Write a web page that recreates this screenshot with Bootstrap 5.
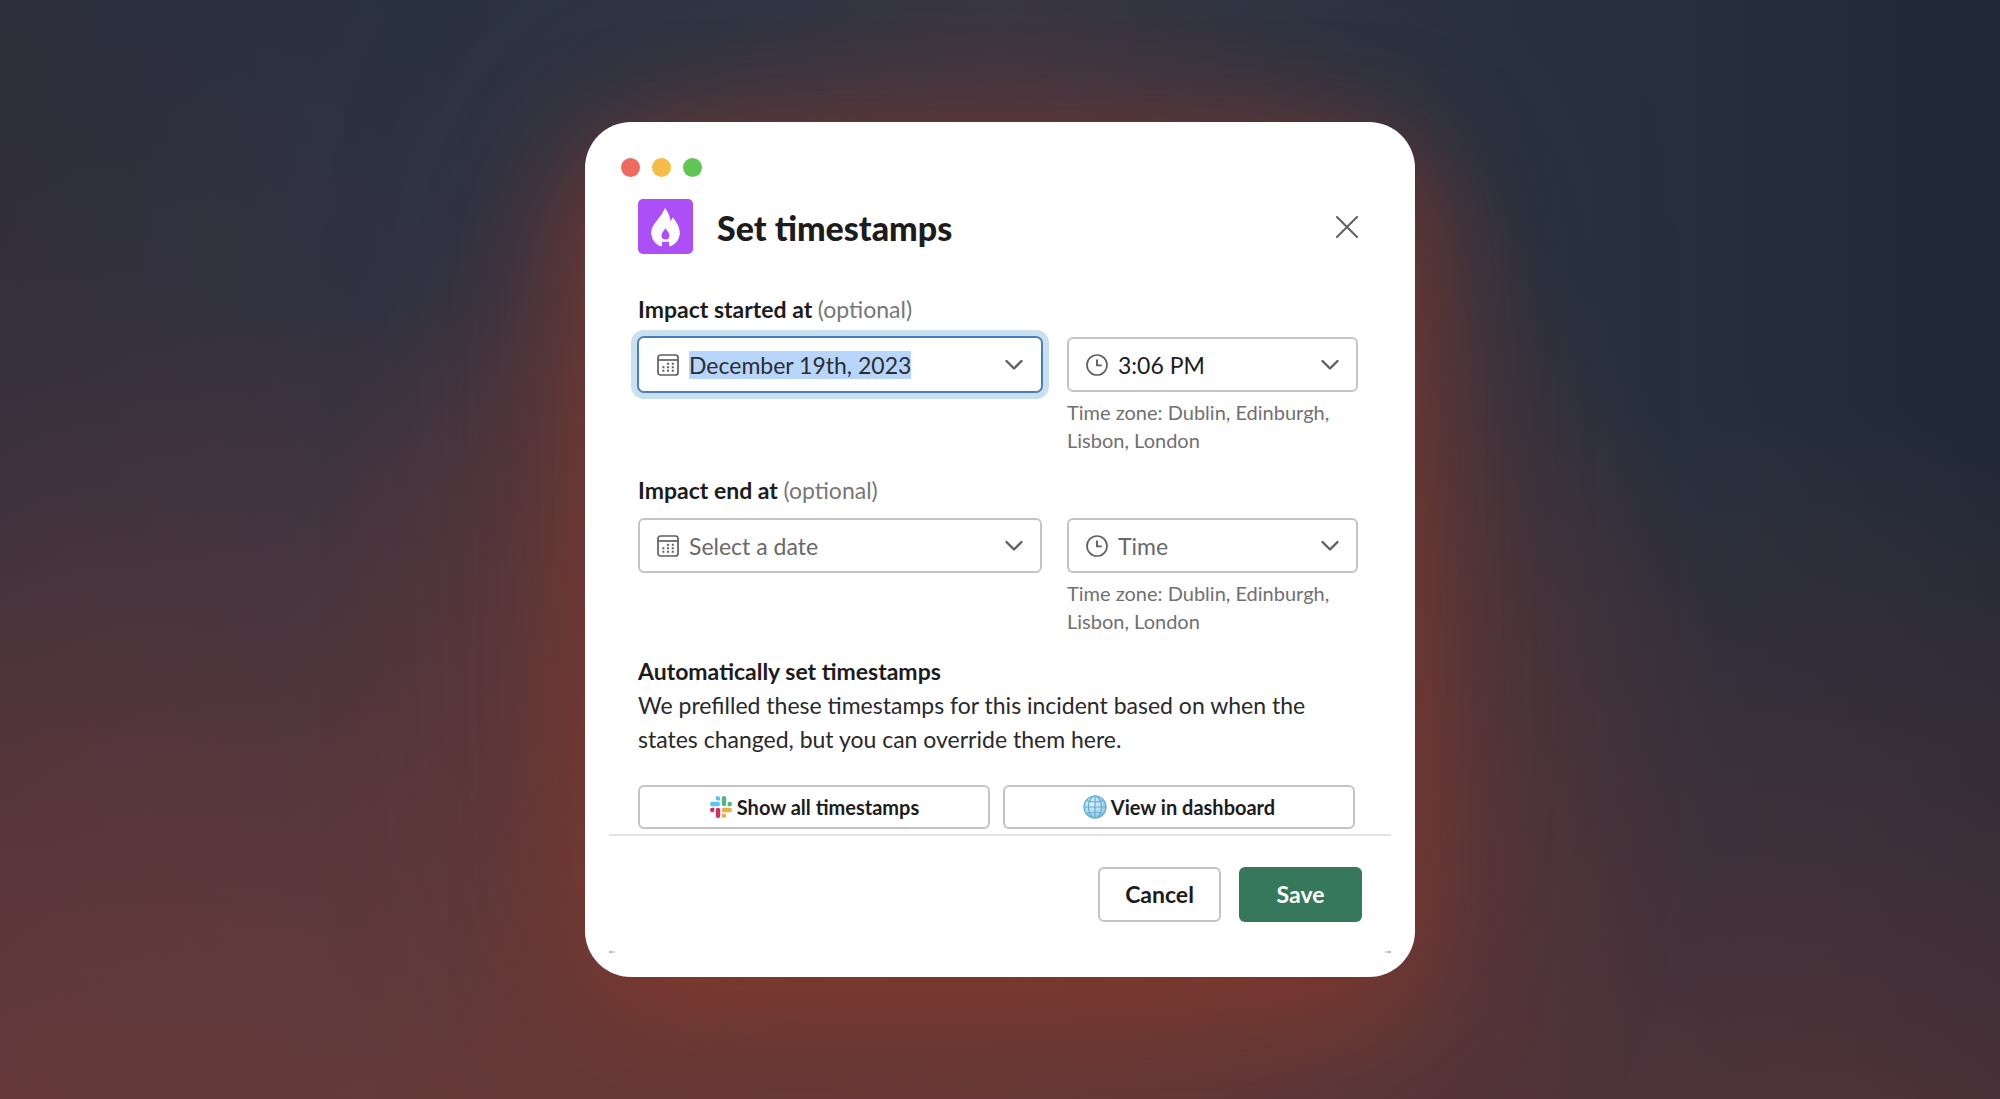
<!DOCTYPE html>
<html lang="en">
<head>
<meta charset="utf-8">
<meta name="viewport" content="width=device-width, initial-scale=1">
<title>Set timestamps</title>
<link href="https://cdn.jsdelivr.net/npm/bootstrap@5.3.0/dist/css/bootstrap.min.css" rel="stylesheet">
<style>
  body {
    font-family: Lato, "Liberation Sans", sans-serif;
    font-size: 23px;
    line-height: 34px;
    color: #1d1c1d;
    background:
      radial-gradient(ellipse 36% 66% at 50% 64%, rgba(112, 56, 50, .75) 0%, rgba(112, 56, 50, .6) 50%, rgba(112, 56, 50, 0) 100%),
      radial-gradient(ellipse 64% 88% at 24% 115%, rgba(112, 60, 56, .95) 0%, rgba(100, 58, 60, .65) 50%, rgba(90, 58, 64, 0) 100%),
      radial-gradient(ellipse 30% 50% at 0% 100%, rgba(116, 52, 50, .7) 0%, rgba(100, 50, 54, 0) 100%),
      radial-gradient(ellipse 50% 70% at 4% 50%, rgba(82, 52, 62, .45) 0%, rgba(82, 52, 62, 0) 100%),
      radial-gradient(ellipse 50% 80% at 90% 115%, rgba(90, 52, 56, .95) 0%, rgba(84, 48, 54, 0) 100%),
      linear-gradient(90deg, #272e3b 0%, #263243 20%, #343644 50%, #26303f 80%, #1f2937 100%);
  }
  .dialog-window {
    max-width: 830px;
    border-radius: 46px;
    padding-top: 36px;
    padding-bottom: 24px;
    box-shadow: 0 34px 110px 6px rgba(132, 56, 42, .78), 0 10px 240px 0 rgba(104, 62, 66, .4);
  }
  .window-dots { padding-left: 36px; gap: 12px; margin-bottom: 22px; }
  .window-dot { width: 19px; height: 19px; }
  .dot-red { background: #ee6a5f; }
  .dot-amber { background: #f5bd47; }
  .dot-green { background: #61c554; }
  .dialog-pad { padding-left: 53px; padding-right: 57px; }
  .dialog-title { font-size: 34px; line-height: 40px; font-weight: 900; margin-left: 24px; padding-top: 2px; }
  .dialog-close { line-height: 0; color: #616061; }
  .form-body { padding-top: 38px; padding-bottom: 5px; }
  .field-label { font-weight: 700; margin-bottom: 11px; }
  .field-label span { font-weight: 400; color: #777; }
  .field-row { gap: 25px; margin-bottom: 19px; }
  .date-col { flex: 404 1 0; min-width: 0; }
  .time-col { flex: 291 1 0; min-width: 0; }
  .picker {
    height: 55px;
    padding: 0 17px;
    border: 2px solid #c4c4c4;
    border-radius: 6px;
    background: #fff;
    color: #616061;
  }
  .picker svg { flex: none; }
  .picker input, .picker select {
    appearance: none;
    flex: 1 1 auto;
    min-width: 0;
    border: 0;
    outline: 0;
    padding: 0;
    margin-left: 10px;
    background: transparent;
    font: inherit;
    line-height: 28px;
    color: #696869;
  }
  .picker .has-value { color: #1d1c1d; }
  .picker input::placeholder { color: #696869; opacity: 1; }
  .picker input::selection { background: rgba(183, 212, 252, .99); color: #2c2d30; }
  .picker:focus-within { border-color: #4a7db8; box-shadow: 0 0 0 1px #4a7db8, 0 0 0 7px #c9e0f0; border-width: 1px; padding: 0 18px; }
  .field-hint { font-size: 20px; line-height: 28px; color: #717071; margin-top: 6px; }
  .body-copy { color: #2a292a; }
  .body-copy strong { color: #1d1c1d; }
  .action-row { gap: 13px; margin-top: 29px; padding-right: 3px; }
  .outline-action {
    border: 2px solid #c4c4c4;
    border-radius: 6px;
    background: #fff;
    color: #1d1c1d;
    font-weight: 700;
  }
  .wide-action { height: 44px; font-size: 20px; padding: 0 8px; }
  .dialog-footer { margin: 0 24px; border-top: 2px solid #e2e2e2; padding: 31px 29px 29px; gap: 18px; }
  .footer-action { width: 123px; height: 55px; font-size: 23px; font-weight: 700; padding: 0; border-radius: 6px; }
  .save-action, .save-action:hover { background: #35785b; color: #fff; }
  .corner-ticks { margin: 0 24px; height: 2px; }
  .corner-tick { width: 8px; height: 2px; background: linear-gradient(90deg, #a9a9a9, #fff); }
  .corner-tick:last-child { background: linear-gradient(270deg, #a9a9a9, #fff); }
</style>
<script src="https://cdn.jsdelivr.net/npm/bootstrap@5.3.0/dist/js/bootstrap.bundle.min.js"></script>
</head>
<body>
<svg class="d-none" aria-hidden="true">
  <symbol id="icon-calendar" viewBox="0 0 22 22">
    <rect x="1" y="1" width="20" height="20" rx="2.5" fill="none" stroke="currentColor" stroke-width="1.7"/>
    <path d="M1 6h20" stroke="currentColor" stroke-width="1.7"/>
    <path d="M10 9.800h2M14.800 9.800h2M5.400 13.200h2M10 13.200h2M14.800 13.200h2M5.400 16.800h2M10 16.800h2M14.800 16.800h2" stroke="currentColor" stroke-width="1.900"/>
  </symbol>
  <symbol id="icon-clock" viewBox="0 0 22 22">
    <circle cx="11" cy="11" r="10" fill="none" stroke="currentColor" stroke-width="1.7"/>
    <path d="M11 5.500V11.400H15.800" fill="none" stroke="currentColor" stroke-width="1.900"/>
  </symbol>
  <symbol id="icon-chevron" viewBox="0 0 18 12">
    <path d="M1.500 2 9 9.500 16.500 2" fill="none" stroke="currentColor" stroke-width="2.400" stroke-linecap="round" stroke-linejoin="round"/>
  </symbol>
</svg>

<main class="container-fluid min-vh-100 d-flex align-items-center justify-content-center">
  <section class="dialog-window bg-white w-100" role="dialog" aria-labelledby="dialog-title">
    <div class="window-dots d-flex">
      <span class="window-dot dot-red rounded-circle"></span>
      <span class="window-dot dot-amber rounded-circle"></span>
      <span class="window-dot dot-green rounded-circle"></span>
    </div>

    <header class="dialog-pad d-flex align-items-center">
      <svg width="55" height="55" viewBox="0 0 55 55" aria-hidden="true">
        <rect width="55" height="55" rx="5" fill="#ad4ff7"/>
        <path d="M27 9C28.500 11 32 15 32.300 22.500L34.800 18.200C37 21.500 41.800 27 41.800 33.500C41.800 40 38.200 45 32.500 47.200C31.500 47.500 31 47 31 46V42.800H24V46C24 47 23.500 47.500 22.500 47.200C16.800 45 13.200 40 13.200 33.500C13.200 25 22.500 20 27 9Z" fill="#fff"/>
        <path d="M27.500 29C28.500 31.500 31.500 33.500 31.500 36.500A4 4 0 0 1 23.500 36.500C23.500 33.500 26.500 31.500 27.500 29Z" fill="#ad4ff7"/>
      </svg>
      <h1 class="dialog-title mb-0 flex-grow-1" id="dialog-title">Set timestamps</h1>
      <button type="button" class="dialog-close btn border-0 p-0" aria-label="Close">
        <svg width="22" height="22" viewBox="0 0 22 22" aria-hidden="true"><path d="M1 1 21 21M21 1 1 21" stroke="currentColor" stroke-width="2" stroke-linecap="round"/></svg>
      </button>
    </header>

    <form class="form-body dialog-pad">
      <label class="field-label d-block" for="start-date">Impact started at <span>(optional)</span></label>
      <div class="field-row d-flex">
        <div class="date-col">
          <div class="picker d-flex align-items-center">
            <svg width="22" height="22" aria-hidden="true"><use href="#icon-calendar"/></svg>
            <input class="has-value" type="text" id="start-date" value="December 19th, 2023" autocomplete="off">
            <svg width="18" height="12" aria-hidden="true"><use href="#icon-chevron"/></svg>
          </div>
        </div>
        <div class="time-col">
          <div class="picker d-flex align-items-center">
            <svg width="22" height="22" aria-hidden="true"><use href="#icon-clock"/></svg>
            <select class="has-value" aria-label="Impact started at, time"><option>3:06 PM</option></select>
            <svg width="18" height="12" aria-hidden="true"><use href="#icon-chevron"/></svg>
          </div>
          <p class="field-hint mb-0">Time zone: Dublin, Edinburgh, Lisbon, London</p>
        </div>
      </div>

      <label class="field-label d-block" for="end-date">Impact end at <span>(optional)</span></label>
      <div class="field-row d-flex">
        <div class="date-col">
          <div class="picker d-flex align-items-center">
            <svg width="22" height="22" aria-hidden="true"><use href="#icon-calendar"/></svg>
            <input type="text" id="end-date" placeholder="Select a date" autocomplete="off">
            <svg width="18" height="12" aria-hidden="true"><use href="#icon-chevron"/></svg>
          </div>
        </div>
        <div class="time-col">
          <div class="picker d-flex align-items-center">
            <svg width="22" height="22" aria-hidden="true"><use href="#icon-clock"/></svg>
            <select aria-label="Impact end at, time"><option>Time</option></select>
            <svg width="18" height="12" aria-hidden="true"><use href="#icon-chevron"/></svg>
          </div>
          <p class="field-hint mb-0">Time zone: Dublin, Edinburgh, Lisbon, London</p>
        </div>
      </div>

      <p class="body-copy mb-0"><strong>Automatically set timestamps</strong><br>We prefilled these timestamps for this incident based on when the states changed, but you can override them here.</p>

      <div class="action-row d-flex">
        <button type="button" class="btn outline-action wide-action flex-fill w-50 d-flex align-items-center justify-content-center gap-1">
          <svg width="24" height="24" viewBox="0 0 24 24" aria-hidden="true">
            <g fill="#5ac5f2"><path d="M8.800 1a2.200 2.200 0 0 1 2.200 2.200v2.200H8.800a2.200 2.200 0 0 1 0-4.400z"/><rect x="1" y="6.800" width="10" height="4.400" rx="2.200"/></g>
            <g fill="#54b584"><rect x="12.800" y="1" width="4.400" height="10.200" rx="2.200"/><path d="M23 9a2.200 2.200 0 0 1-2.200 2.200h-2.200V9A2.200 2.200 0 0 1 23 9z"/></g>
            <g fill="#e8b13d"><rect x="12.800" y="12.800" width="10.200" height="4.400" rx="2.200"/><path d="M15 23a2.200 2.200 0 0 1-2.200-2.200v-2.200H15A2.200 2.200 0 0 1 15 23z"/></g>
            <g fill="#d92b5c"><rect x="6.800" y="12.800" width="4.400" height="10.200" rx="2.200"/><path d="M1 15a2.200 2.200 0 0 1 2.200-2.200h2.200V15A2.200 2.200 0 0 1 1 15z"/></g>
          </svg>
          <span>Show all timestamps</span>
        </button>
        <button type="button" class="btn outline-action wide-action flex-fill w-50 d-flex align-items-center justify-content-center gap-1">
          <svg width="24" height="24" viewBox="0 0 24 24" aria-hidden="true">
            <defs><radialGradient id="globe-fill" cx=".4" cy=".35" r=".7"><stop offset="0" stop-color="#e9f6fc"/><stop offset="1" stop-color="#8cc4e2"/></radialGradient></defs>
            <circle cx="12" cy="12" r="11.200" fill="url(#globe-fill)"/>
            <g fill="none" stroke="#63aed6" stroke-width="1.200"><circle cx="12" cy="12" r="11"/><ellipse cx="12" cy="12" rx="6.500" ry="11"/><path d="M12 1v22M1 12h22M3.500 5.500Q12 8.500 20.500 5.500M3.500 18.500Q12 15.500 20.500 18.500"/></g>
          </svg>
          <span>View in dashboard</span>
        </button>
      </div>
    </form>

    <footer class="dialog-footer d-flex justify-content-end">
      <button type="button" class="btn outline-action footer-action">Cancel</button>
      <button type="button" class="btn save-action footer-action border-0">Save</button>
    </footer>
    <div class="corner-ticks d-flex justify-content-between"><span class="corner-tick"></span><span class="corner-tick"></span></div>
  </section>
</main>
<script>
  const startDate = document.getElementById('start-date');
  startDate.focus();
  startDate.select();
</script>
</body>
</html>
